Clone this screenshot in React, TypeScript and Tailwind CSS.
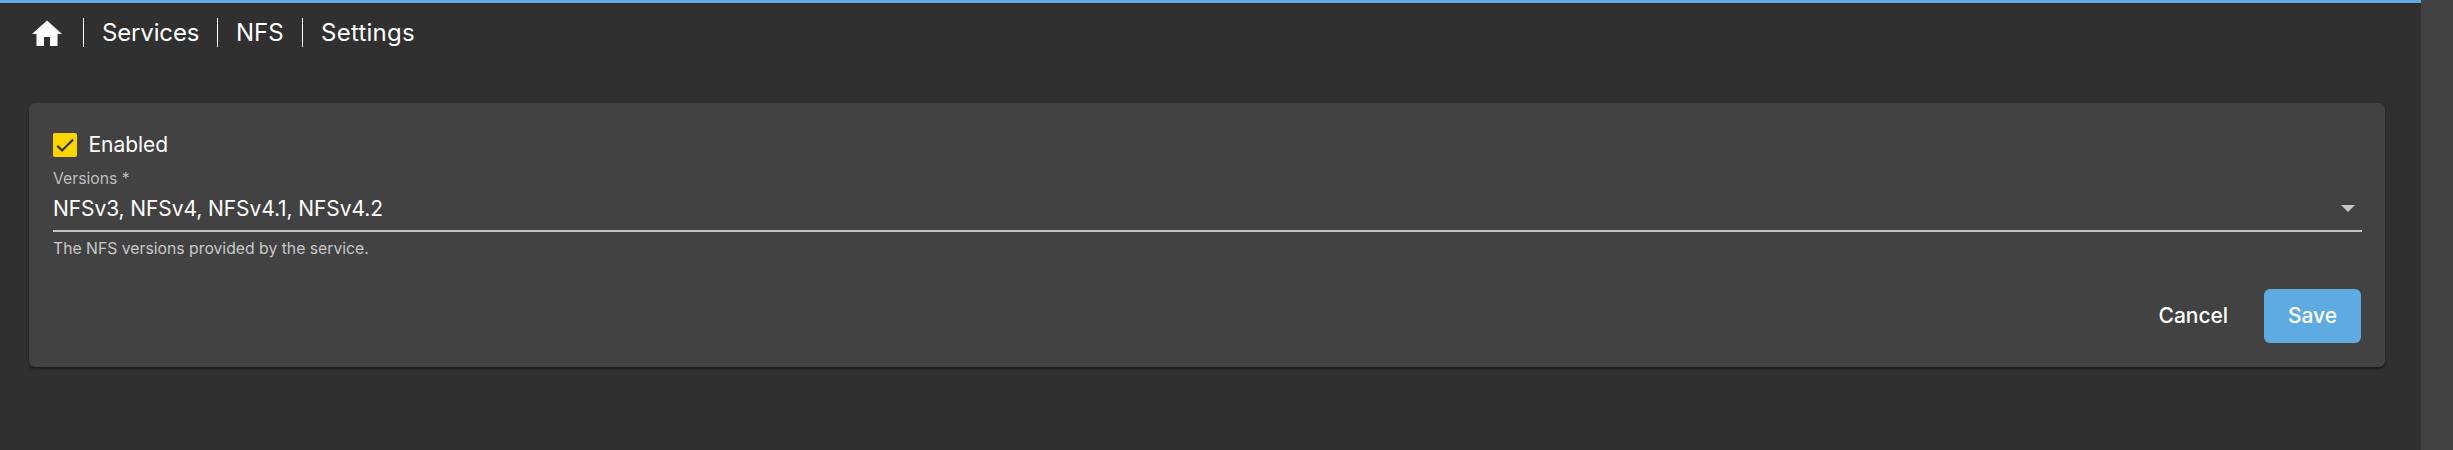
const crumbs = [
  { label: "Services", className: "w-[97px] tracking-[-0.15px]" },
  { label: "NFS", className: "w-[48px]" },
  { label: "Settings", className: "tracking-[0.25px]" },
];

function Breadcrumb() {
  return (
    <nav className="flex h-[63px] items-center pl-[29px] text-[24px] leading-[36px] text-white">
      <svg viewBox="0 0 24 24" className="mb-px size-[36px] shrink-0" fill="currentColor">
        <path d="M10,20V14H14V20H19V12H22L12,3L2,12H5V20H10Z" />
      </svg>
      {crumbs.map(({ label, className }) => (
        <div key={label} className="flex items-center pb-[4px]">
          <span className="mr-[18px] ml-[18px] h-[29px] w-px bg-white" />
          <a className={className}>{label}</a>
        </div>
      ))}
    </nav>
  );
}

export default function App() {
  return (
    <div className="flex h-[450px] w-full bg-[#303030] font-['Inter',sans-serif] text-white">
      <main className="flex min-w-0 flex-1 flex-col border-t-[3px] border-[#5dabe0]">
        <Breadcrumb />
        <section className="mt-[37px] mr-[36px] ml-[29px] flex h-[264px] flex-col rounded-[6px] bg-[#424242] pt-[30px] pr-[23px] pl-[24px] shadow-[0_3px_1.5px_-1.5px_rgba(0,0,0,0.2),0_1.5px_1.5px_rgba(0,0,0,0.14),0_1.5px_4.5px_rgba(0,0,0,0.12)]">
          <label className="flex h-[24px] items-center gap-[11.5px] text-[21px] leading-[24px] tracking-[-0.05px]">
            <span className="flex size-[24px] items-center justify-center rounded-[2px] bg-[#fad500]">
              <svg viewBox="0 0 24 24" className="size-[18px]" fill="none" stroke="#303030" strokeWidth="2.9">
                <path d="M1.73,12.91 8.1,19.28 22.79,4.59" />
              </svg>
            </span>
            Enabled
          </label>
          <div className="mt-[11px] pt-px text-[15.75px] leading-[19px] text-[#bebebe]">Versions *</div>
          <div className="flex h-[44px] items-start justify-between border-b-2 border-[#c6c6c6] pr-[7px]">
            <span className="pt-[6px] text-[21px] leading-[30px] tracking-[-0.09px]">NFSv3, NFSv4, NFSv4.1, NFSv4.2</span>
            <svg viewBox="0 0 14 7" className="mt-[17px] h-[7px] w-[14px]" fill="#c6c6c6">
              <path d="M0 0h14L7 7z" />
            </svg>
          </div>
          <div className="mt-[6px] text-[15.75px] leading-[22px] text-[#c8c8c8]">The NFS versions provided by the service.</div>
          <div className="mt-[29px] mr-px flex h-[54px] justify-end gap-[12px] text-[21px] font-medium tracking-[-0.05px]">
            <button className="px-[24px]">Cancel</button>
            <button className="w-[97px] rounded-[6px] bg-[#5dabe0]">Save</button>
          </div>
        </section>
      </main>
      <aside className="w-[32px] shrink-0 bg-[#424242]" />
    </div>
  );
}
